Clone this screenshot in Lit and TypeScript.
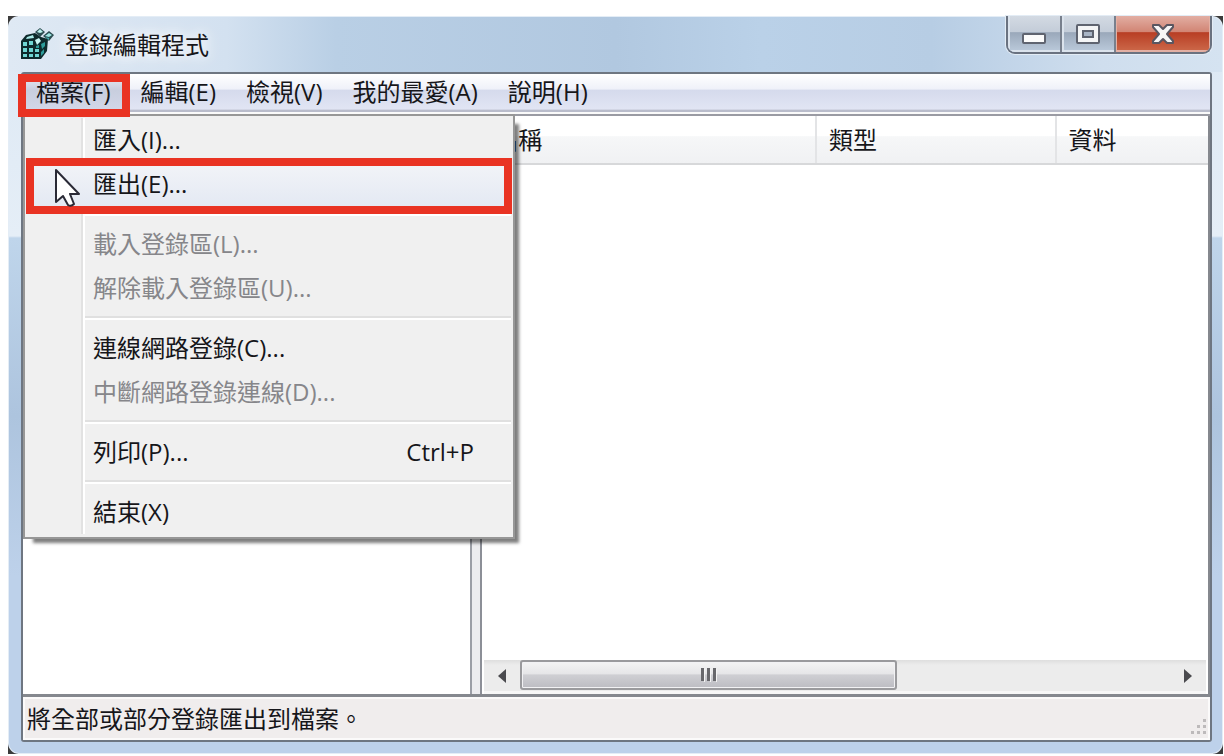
import { LitElement, html, svg, css, nothing } from "lit";
import { customElement, property, state } from "lit/decorators.js";
import { classMap } from "lit/directives/class-map.js";

interface MenuEntry {
  label: string;
  shortcut?: string;
  disabled?: boolean;
  marked?: boolean;
}

const FILE_MENU: MenuEntry[][] = [
  [{ label: "匯入(I)..." }, { label: "匯出(E)...", marked: true }],
  [
    { label: "載入登錄區(L)...", disabled: true },
    { label: "解除載入登錄區(U)...", disabled: true },
  ],
  [
    { label: "連線網路登錄(C)..." },
    { label: "中斷網路登錄連線(D)...", disabled: true },
  ],
  [{ label: "列印(P)...", shortcut: "Ctrl+P" }],
  [{ label: "結束(X)" }],
];

const MENUS = ["編輯(E)", "檢視(V)", "我的最愛(A)", "說明(H)"];

const sharedText = css`
  :host {
    box-sizing: border-box;
    font-family: "Open Sans", "Noto Sans CJK TC", sans-serif;
    font-size: 24px;
    line-height: 32px;
    color: #16161a;
  }
  * {
    box-sizing: border-box;
  }
  button {
    font: inherit;
    color: inherit;
    margin: 0;
    border: 0;
    background: none;
    text-align: left;
    white-space: nowrap;
  }
  button:focus {
    outline: none;
  }
`;

@customElement("title-bar")
class TitleBar extends LitElement {
  @property() caption = "";

  static styles = [
    sharedText,
    css`
      :host {
        display: flex;
        align-items: flex-start;
        height: 56px;
      }
      .app {
        flex: 1;
        display: flex;
        align-items: center;
        gap: 10px;
        padding-top: 12px;
      }
      .name {
        font-size: 24px;
        font-weight: 400;
        margin: 0;
        text-shadow: 0 0 12px #fff, 0 0 18px #fff;
      }
      .controls {
        display: flex;
        border: 2px solid #6a7280;
        border-top: 0;
        border-radius: 0 0 9px 9px;
        overflow: hidden;
        box-shadow: 0 0 0 1px #e3ecf5;
      }
      .control {
        display: flex;
        align-items: center;
        justify-content: center;
        height: 36px;
        padding: 0;
        width: 54px;
        border-right: 2px solid #78808d;
        background: linear-gradient(#d3dae3, #c3ccd8 45%, #9aa8ba 46%, #bccbdc);
        box-shadow: inset 1px -1px 0 1px #dbe3ec;
      }
      .close {
        width: 94px;
        border-right: 0;
        background: linear-gradient(#e2aea3, #d18473 45%, #b83e24 46%, #cd6a4b);
        box-shadow: inset 0 -1px 0 1px #e3b0a4;
      }
    `,
  ];

  render() {
    return html`
      <div class="app">
        <svg width="34" height="34" viewBox="0 0 34 34" aria-hidden="true">
          <path d="M0 13L5 7L14 5L20 9L27 11L26 23L20 31H0Z" fill="#0e2a2c" />
          <path d="M2 14h4v4H2zM8 13h4v4H8zM2 20h4v4H2zM8 20h4v4H8zM14 21h4v3h-4zM2 26h4v3H2zM8 26h4v3H8zM14 26h4v3h-4z" fill="#6fd6d3" />
          <path d="M6 9l6-2 1 3-8 1z" fill="#a9ebe8" />
          <path d="M14 12l4-2 2 3-4 4z" fill="#c9f5f3" />
          <path d="M20 16l4-2v4l-3 3zM20 24l3-3v4l-3 3zM15 18l3-1v3h-3z" fill="#2d9c9a" />
          <path d="M19 0L24 4L19 9L14 4Z" fill="#2b4c50" />
          <path d="M19 1L22 4L19 5L16 4Z" fill="#bdf2ef" />
          <path d="M28 3L33 7L28 13L22 8Z" fill="#2b4c50" />
          <path d="M28 5L31 7L28 9L24 8Z" fill="#9ce6e3" />
          <path d="M24 9L28 10V12Z" fill="#3fb0ae" />
        </svg>
        <h1 class="name">${this.caption}</h1>
      </div>
      <div class="controls">
        <button class="control" aria-label="最小化">
          <svg width="26" height="22" viewBox="0 0 26 22">
            <rect x="2" y="11" width="22" height="9" rx="1" fill="#fbfbfb" stroke="#5f6470" stroke-width="2" />
          </svg>
        </button>
        <button class="control" aria-label="最大化">
          <svg width="26" height="22" viewBox="0 0 26 22">
            <rect x="2" y="2" width="22" height="18" rx="1" fill="#f4f5f6" stroke="#5f6470" stroke-width="2" />
            <rect x="8" y="8" width="10" height="6" fill="#a9b5c5" stroke="#5f6470" stroke-width="2" />
          </svg>
        </button>
        <button class="control close" aria-label="關閉">
          <svg width="24" height="22" viewBox="0 0 24 22">
            <path
              d="M2 2H8L12 6L16 2H22V4L16 11L22 18V20H16L12 16L8 20H2V18L8 11L2 4Z"
              fill="#f6f6f6"
              stroke="#5a5660"
              stroke-width="2"
              stroke-linejoin="round"
            />
          </svg>
        </button>
      </div>
    `;
  }
}

@customElement("file-menu")
class FileMenu extends LitElement {
  static styles = [
    sharedText,
    css`
      :host {
        display: block;
        width: 492px;
        padding: 2px 2px 3px 1px;
        border: 2px solid #979797;
        background: #f0f0f0;
        box-shadow: 7px 7px 3px -3px rgba(0, 0, 0, 0.5);
      }
      .list {
        background: linear-gradient(90deg, transparent 55px, #e2e2e2 55px, #e2e2e2 57px, #fff 57px, #fff 59px, transparent 59px);
      }
      .group + .group {
        margin-top: 6px;
        padding-top: 6px;
        border-top: 4px solid transparent;
        border-image: linear-gradient(#e0e0e0 50%, #fff 50%) 4 0 0 0;
      }
      .group + .group {
        border: 0;
        padding-top: 10px;
        background:
          linear-gradient(#e0e0e0 50%, #fff 50%) 59px 0 / 100% 4px no-repeat;
      }
      .item {
        position: relative;
        display: flex;
        align-items: center;
        justify-content: space-between;
        width: 100%;
        height: 44px;
        padding: 0 37px 0 67px;
      }
      .item:disabled {
        color: #86868a;
      }
      .marked {
        background: linear-gradient(#f2f4f8, #e4e9f3);
      }
      .marked::after {
        content: "";
        position: absolute;
        inset: -4px -1px -8px 0;
        border: 8px solid #e93323;
      }
      .pointer {
        position: absolute;
        left: 28px;
        top: 6px;
        z-index: 1;
      }
    `,
  ];

  render() {
    return html`<div class="list" role="menu">
      ${FILE_MENU.map(
        (group) => html`<div class="group">
          ${group.map(
            (entry) => html`<button
              role="menuitem"
              class=${classMap({ item: true, marked: !!entry.marked })}
              ?disabled=${entry.disabled}
            >
              <span>${entry.label}</span>
              ${entry.shortcut ? html`<span>${entry.shortcut}</span>` : nothing}
              ${entry.marked
                ? html`<svg class="pointer" width="28" height="40" viewBox="0 0 28 40">
                    <path
                      d="M2 2V34L9 28L14 37Q17 39 20 36L16 26H25Z"
                      fill="#fff"
                      stroke="#2a2a36"
                      stroke-width="2"
                      stroke-linejoin="round"
                    />
                  </svg>`
                : nothing}
            </button>`
          )}
        </div>`
      )}
    </div>`;
  }
}

@customElement("menu-bar")
class MenuBar extends LitElement {
  @state() private open = true;

  static styles = [
    sharedText,
    css`
      :host {
        position: relative;
        z-index: 2;
        display: flex;
        height: 42px;
        border-bottom: 2px solid #9a9ba3;
        background: linear-gradient(#fff, #eff1f9 38%, #d5daec 40%, #e1e5f4 88%, #b9bccb 90%, #b9bccb 94%, #fafafa 95%);
      }
      .entry {
        height: 36px;
        padding: 0 15px;
      }
      .first {
        position: relative;
        padding-left: 13px;
      }
      .pressed {
        background: linear-gradient(#eceef5, #c8cede 45%, #d2d7e8);
        border-radius: 4px;
      }
      .first::after {
        content: "";
        position: absolute;
        inset: 0 -4px -7px -5px;
        border: 8px solid #e93323;
        z-index: 3;
      }
      .popup {
        position: absolute;
        left: 0;
        top: 40px;
      }
    `,
  ];

  render() {
    return html`
      ${this.open ? html`<file-menu class="popup"></file-menu>` : nothing}
      <button
        class=${classMap({ entry: true, first: true, pressed: this.open })}
        @click=${() => (this.open = !this.open)}
      >檔案(F)</button>
      ${MENUS.map((label) => html`<button class="entry">${label}</button>`)}
    `;
  }
}

@customElement("scroll-bar")
class ScrollBar extends LitElement {
  static styles = [
    sharedText,
    css`
      :host {
        display: flex;
        align-items: stretch;
        height: 34px;
        margin: 0 2px;
        border-bottom: 3px solid #f7f7f7;
        background: linear-gradient(#dedede, #ececec 5px);
      }
      .arrow {
        display: flex;
        align-items: center;
        justify-content: center;
        width: 36px;
        padding: 0;
      }
      .track {
        flex: 1;
      }
      .thumb {
        display: flex;
        align-items: center;
        justify-content: center;
        width: 58%;
        height: 30px;
        border: 2px solid #9a9a9d;
        border-radius: 3px;
        background: linear-gradient(#f4f4f4, #e6e6e8 45%, #cfcfd3 50%, #bcbcc2);
        box-shadow: inset 0 0 0 1px #f2f2f4;
      }
    `,
  ];

  render() {
    return html`
      <button class="arrow" aria-label="向左捲動">
        <svg width="10" height="16" viewBox="0 0 10 16"><path d="M9 1V15L1 8Z" fill="#4a4a4e" /></svg>
      </button>
      <div class="track">
        <div class="thumb">
          <svg width="18" height="14" viewBox="0 0 18 14">
            ${[1, 7, 13].map(
              (x) => svg`<rect x=${x} y="0" width="3" height="13" fill="#68686c" /><rect x=${x + 3} y="1" width="1" height="13" fill="#f4f4f4" />`
            )}
          </svg>
        </div>
      </div>
      <button class="arrow" aria-label="向右捲動">
        <svg width="10" height="16" viewBox="0 0 10 16"><path d="M1 1V15L9 8Z" fill="#4a4a4e" /></svg>
      </button>
    `;
  }
}

@customElement("app-root")
class AppRoot extends LitElement {
  static styles = [
    sharedText,
    css`
      :host {
        display: flex;
        min-height: 100vh;
        padding: 16px 1px 2px 8px;
        background: #fff;
      }
      .backdrop {
        flex: 1;
        display: flex;
        min-width: 0;
        background: linear-gradient(90deg, #3b3b3b 10px, transparent 10px calc(100% - 10px), #3b3b3b calc(100% - 10px));
      }
      .window {
        flex: 1;
        min-width: 0;
        display: flex;
        flex-direction: column;
        padding: 0 11px 12px 13px;
        border-radius: 11px;
        background:
          linear-gradient(90deg, #dfe9f4, #d3e1f0 18%, #b9cfe5 27%, #b1c8e0 50%, #bad1e8 62%, #b7cde4 76%, #cfdeee 90%, #d5e3f1) top / 100% 56px no-repeat,
          linear-gradient(#dce8f4, #e5eef7 220px, #bfd5eb 222px, #adc4de 400px, #bdd1ea 560px, #bdd1ea);
        box-shadow: inset 0 0 0 1px #e4edf6;
      }
      .client {
        flex: 1;
        display: flex;
        flex-direction: column;
        min-height: 0;
        border: 2px solid #6e7681;
        border-radius: 3px;
        background: #f0eded;
      }
      .panes {
        flex: 1;
        display: grid;
        grid-template-columns: minmax(0, 381fr) minmax(0, 619fr);
        gap: 8px;
        background: #ececef;
        border-bottom: 3px solid #85888e;
      }
      .tree {
        background: #fff;
        border-right: 2px solid #9b9ea6;
      }
      .values {
        display: flex;
        flex-direction: column;
        background: #fff;
        border-left: 2px solid #8c8f97;
        border-right: 2px solid #85888e;
      }
      .grid {
        width: 100%;
        table-layout: fixed;
        border-collapse: collapse;
      }
      .head {
        height: 48px;
        padding: 0 0 0 12px;
        font-weight: 400;
        text-align: left;
        border-right: 2px solid #e3e4e6;
        border-bottom: 2px solid #d7d8da;
        background: linear-gradient(#fff 42%, #f6f7f8 44%, #f0f1f3);
      }
      .head:last-child {
        border-right: 0;
      }
      .col-name {
        width: 46%;
      }
      .col-type {
        width: 33%;
      }
      .space {
        flex: 1;
      }
      .status {
        display: flex;
        align-items: center;
        justify-content: space-between;
        height: 43px;
        padding-left: 2px;
        border: 2px solid #fbfafa;
      }
      .grip {
        align-self: flex-end;
      }
    `,
  ];

  render() {
    return html`
      <div class="backdrop">
        <div class="window">
          <title-bar caption="登錄編輯程式"></title-bar>
          <main class="client">
            <menu-bar></menu-bar>
            <div class="panes">
              <div class="tree"></div>
              <div class="values">
                <table class="grid">
                  <thead>
                    <tr>
                      <th class="head col-name">名稱</th>
                      <th class="head col-type">類型</th>
                      <th class="head">資料</th>
                    </tr>
                  </thead>
                </table>
                <div class="space"></div>
                <scroll-bar></scroll-bar>
              </div>
            </div>
            <footer class="status">
              <span>將全部或部分登錄匯出到檔案。</span>
              <svg class="grip" width="18" height="20" viewBox="0 0 18 20" aria-hidden="true">
                <path d="M13 1h3v3h-3zM13 7h3v3h-3zM13 13h3v3h-3zM7 7h3v3H7zM7 13h3v3H7zM1 13h3v3H1z" fill="#bdbabb" />
              </svg>
            </footer>
          </main>
        </div>
      </div>
    `;
  }
}
